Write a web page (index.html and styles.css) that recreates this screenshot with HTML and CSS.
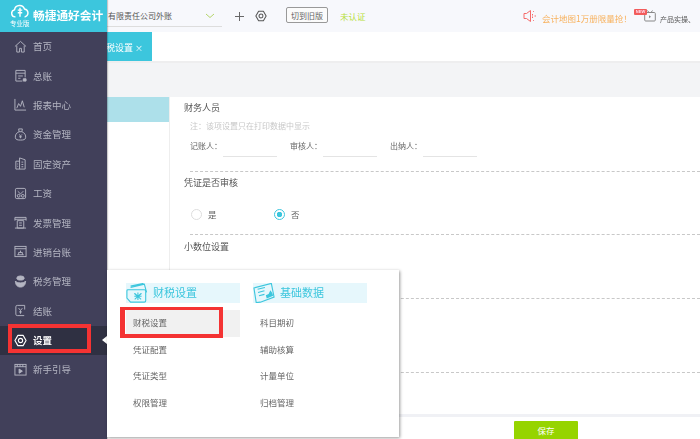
FILE: index.html
```html
<!DOCTYPE html>
<html lang="zh">
<head>
<meta charset="utf-8">
<title>畅捷通好会计</title>
<link rel="stylesheet" href="styles.css">
</head>
<body>
<div class="app">
  <main class="main">
    <header class="topbar">
      <div class="company">
        <span class="company-name">有限责任公司外账</span>
        <svg class="chev" viewBox="0 0 10 6"><path d="M1 1l4 3.5L9 1"/></svg>
      </div>
      <svg class="plus" viewBox="0 0 10 10"><path d="M5 0v10M0 5h10"/></svg>
      <svg class="gear" viewBox="0 0 14 14"><path d="M4.2 1.5h5.6L13 7l-3.2 5.5H4.2L1 7z" stroke-linejoin="round"/><circle cx="7" cy="7" r="2.3"/></svg>
      <button class="old-btn">切到旧版</button>
      <span class="cert">未认证</span>
      <div class="top-right">
        <svg class="speaker" viewBox="0 0 14 14"><path d="M1 4.5h2.5L7.5 1.5v11L3.500 9.500H1z"/><path d="M10 2l.8.8M11.500 7h1.500M10 12l.8-.8M9.500 5v4" stroke-dasharray="1.500 1"/></svg>
        <span class="promo">会计地图1万册限量抢！</span>
        <span class="tv-wrap">
          <svg class="tv" viewBox="0 0 12 12"><path d="M3.500 0.500l1.500 2M8.500 0.500l-1.500 2"/><rect x="0.700" y="2.500" width="10.600" height="8.500" rx="1"/><path class="tv-play" d="M5 5.200l2 1.500-2 1.500z"/></svg>
          <span class="new-badge">NEW</span>
        </span>
        <span class="guide">产品实操、</span>
      </div>
    </header>
    <nav class="tabs"><span class="tab">财税设置 <i class="tab-x">×</i></span></nav>
    <div class="band"></div>
    <div class="body">
      <aside class="left-panel"><div class="left-active"></div></aside>
      <section class="content">
        <h3 class="title first">财务人员</h3>
        <p class="note">注：该项设置只在打印数据中显示</p>
        <div class="fields">
          <label class="field">记账人：<span class="input"></span></label>
          <label class="field">审核人：<span class="input"></span></label>
          <label class="field">出纳人：<span class="input"></span></label>
        </div>
        <hr class="rule r1">
        <h3 class="title t2">凭证是否审核</h3>
        <div class="radios">
          <span class="radio"><i class="dot"></i>是</span>
          <span class="radio on"><i class="dot"></i>否</span>
        </div>
        <hr class="rule r2">
        <h3 class="title">小数位设置</h3>
        <hr class="rule r3">
        <hr class="rule r4">
      </section>
    </div>
    <footer class="footer"><button class="save">保存</button></footer>
  </main>

  <aside class="sidebar">
    <div class="logo">
      <svg class="logo-icon" viewBox="0 0 20 15"><path d="M5 14H4.500a4 4 0 0 1-.6-7.900A5.800 5.800 0 0 1 15 5.200a4.500 4.500 0 0 1 .5 8.800H15"/><path d="M10 4v10M7.500 6.500h5M7.500 9.500h5" class="logo-bar"/></svg>
      <span class="logo-text">畅捷通好会计</span>
      <span class="logo-sub">专业版</span>
    </div>
    <ul class="menu">
      <li class="item"><svg viewBox="0 0 14 14"><path d="M1 7l6-5.500L13 7M3 6v7h3V9h2v4h3V6"/></svg>首页</li>
      <li class="item"><svg viewBox="0 0 14 14"><path d="M9 13H2V1.500h10V9M2 4.500h10M4.500 7.500h5M4.500 10h2.500"/><path d="M10 10.500h3v2.500h-3z" class="fill"/></svg>总账</li>
      <li class="item"><svg viewBox="0 0 14 14"><path d="M1 1v12h12M3 11l2-5 2 3 2-6 2 7"/></svg>报表中心</li>
      <li class="item"><svg viewBox="0 0 14 14"><path d="M5 1h4L8.500 4c3 1 4.500 4 4 6.500-.3 2-2 2.500-5.500 2.500s-5.200-.5-5.500-2.500C1 8 2.500 5 5.500 4zM5.500 4h3M5.500 7l1.500 1.500L8.500 7M7 8.500V11M5.500 9.500h3"/></svg>资金管理</li>
      <li class="item"><svg viewBox="0 0 14 14"><path d="M2 4.500h4M2 4.500V13h10V3L6 1v12M8 5.500h2M8 8h2M8 10.500h2M3.500 7.500h1M3.500 10h1"/></svg>固定资产</li>
      <li class="item"><svg viewBox="0 0 14 14"><rect x="1.500" y="1.500" width="11" height="11" rx="1.500"/><circle cx="5" cy="9.500" r="1.500"/><circle cx="9.500" cy="9.500" r="1.500"/><path d="M4 4.500l3 3 3-3"/></svg>工资</li>
      <li class="item"><svg viewBox="0 0 14 14"><path d="M1 5V1.500h12V5M1 3.500h12M3.500 5h7v8h-7zM5.500 7.500h3M5.500 10h3M1 13h12"/></svg>发票管理</li>
      <li class="item"><svg viewBox="0 0 14 14"><rect x="1" y="1.500" width="12" height="11"/><path d="M1 4h12M3.500 10.500h7M5 10.500V8h4v2.500M7 8V6"/></svg>进销台账</li>
      <li class="item"><svg viewBox="0 0 14 14"><path d="M3 3.500a4 2.500 0 0 1 8 0c0 1-1 2-4 2s-4-1-4-2z" class="fill"/><path d="M1.500 6.500c0 4 2 6.500 5.500 6.500s5.500-2.500 5.500-6.500c-1 1.500-3 2-5.500 2s-4.500-.5-5.500-2z" class="fill"/></svg>税务管理</li>
      <li class="item"><svg viewBox="0 0 14 14"><path d="M11 12.500H3.500a1.500 1.500 0 0 1-1.500-1.500V3a1.500 1.500 0 0 1 1.500-1.500h8V6M5 4.500l2 2.500 2-2.500M7 7v3.500M5.500 8.500h3"/></svg>结账</li>
      <li class="item active"><svg viewBox="0 0 14 14"><path d="M4.200 1.500h5.600L13 7l-3.200 5.500H4.200L1 7z" stroke-linejoin="round"/><circle cx="7" cy="7" r="2.300"/></svg>设置<i class="caret"></i></li>
      <li class="item"><svg viewBox="0 0 14 14"><rect x="1" y="1.500" width="12" height="11.500"/><path d="M1 4h12M3.500 1.500V4M6.500 1.500V4M9.500 1.500V4"/><path d="M5.500 6.500l3.500 2.300-3.500 2.200z" class="fill"/></svg>新手引导</li>
    </ul>
  </aside>

  <div class="popup">
    <div class="pop-col">
      <div class="pop-head">
        <svg class="pop-icon" viewBox="0 0 24 21"><path d="M5 4.500L20 .8l2.500 9M2 7h18a1.500 1.500 0 0 1 1.500 1.500V19a1.500 1.500 0 0 1-1.500 1.500H5L1 16V8a1 1 0 0 1 1-1zM5 3l14-3M9 11l4 3.500 4-3.500M13 10v8M9 14h8M9.500 17.500l7-6.500M16.500 17.500l-7-6.500"/></svg>
        <span class="pop-title">财税设置</span>
      </div>
      <a class="pop-item hot">财税设置</a>
      <a class="pop-item">凭证配置</a>
      <a class="pop-item">凭证类型</a>
      <a class="pop-item">权限管理</a>
    </div>
    <div class="pop-col">
      <div class="pop-head">
        <svg class="pop-icon" viewBox="0 0 24 21"><path d="M1 5L20 0l3 15-15 5.500L3.500 21zM5 6.500l8-2M5.500 10l7-2M6.500 13.500l6-1.500"/><path class="fill-t" d="M14 13l3-1.500 2-4 2 3 1 3-7 3z"/></svg>
        <span class="pop-title">基础数据</span>
      </div>
      <a class="pop-item">科目期初</a>
      <a class="pop-item">辅助核算</a>
      <a class="pop-item">计量单位</a>
      <a class="pop-item">归档管理</a>
    </div>
  </div>

  <div class="mark mark-menu"></div>
  <div class="mark mark-pop"></div>
</div>
</body>
</html>
```
FILE: styles.css
```css
* { box-sizing: border-box; }
html, body { margin: 0; padding: 0; }
body {
  width: 700px;
  height: 439px;
  overflow: hidden;
  background: #fff;
  font-family: "Noto Sans CJK SC", "Liberation Sans", sans-serif;
  font-size: 9px;
  color: #555;
}
.app { position: relative; width: 700px; height: 439px; overflow: hidden; filter: blur(0.35px); }
.main { display: flex; flex-direction: column; height: 439px; }

/* top bar */
.topbar { display: flex; align-items: center; height: 32px; background: #f7f8fc; flex: none; }
.company {
  display: flex; align-items: center; justify-content: space-between;
  width: 222px; height: 27px; margin-top: -5px; padding: 5px 4px 0 108px;
  border-bottom: 1px solid #ddd;
}
.company-name { font-size: 8px; color: #555; }
.chev { width: 10px; height: 6px; margin-right: 3px; fill: none; stroke: #b5d56a; stroke-width: 1; }
.plus { width: 9px; height: 9px; margin-left: 13px; fill: none; stroke: #666; stroke-width: 1.100; }
.gear { width: 12px; height: 12px; margin-left: 11px; fill: none; stroke: #555; stroke-width: 1.200; }
.old-btn {
  width: 42px; height: 16px; margin: -2px 0 0 19px; padding: 0;
  background: #fbfbfb; border: 1px solid #999; border-radius: 2px;
  font: 8px "Noto Sans CJK SC", sans-serif; color: #666;
}
.cert { margin-left: 12px; color: #b8df3c; font-size: 8.500px; }
.top-right { display: flex; align-items: center; margin-left: auto; padding-right: 5px; }
.speaker { width: 14px; height: 14px; margin-right: 5px; fill: none; stroke: #f56a6a; stroke-width: 1; }
.promo { color: #f8b25f; font-size: 8.500px; margin-top: 4px; width: 92px; white-space: nowrap; }
.tv-wrap { position: relative; display: block; width: 22px; height: 13px; margin-top: -2px; }
.tv { position: absolute; left: 10px; top: 1px; width: 12px; height: 12px; fill: none; stroke: #888; stroke-width: 1; }
.tv .tv-play { fill: #888; stroke: none; }
.new-badge {
  position: absolute; left: 0; top: 0; width: 13px; height: 6px;
  background: #f25c5c; color: #fde; font: bold 4px/6px "Liberation Sans", sans-serif;
  text-align: center; border-radius: 1px;
}
.guide { margin: 5px 0 0 4px; color: #555; font-size: 7px; white-space: nowrap; }

/* tabs */
.tabs { height: 29px; background: #fff; flex: none; display: flex; }
.tab {
  width: 152px; height: 29px; padding-left: 97px;
  background: #3cc6dd; color: #fff; font-size: 9px; line-height: 32px; white-space: nowrap;
}
.tab-x { font-style: normal; font-size: 8px; }
.band { height: 36px; background: #f3f4f6; border-top: 2px solid #eeeeef; flex: none; }

/* body */
.body { display: flex; height: 317px; flex: none; }
.left-panel { width: 170px; border-right: 1px solid #eee; flex: none; }
.left-active { height: 25px; background: #ade0ea; }
.content { flex: 1; min-width: 0; padding: 4px 0 0 14px; overflow: hidden; }
.title { margin: 5px 0 0; font-weight: normal; font-size: 9px; line-height: 14px; color: #555; }
.title.first { margin-top: 0; }
.title.t2 { margin-top: 4px; }
.note { margin: 4px 0 0 6px; line-height: 13px; height: 14px; color: #c8c8c8; font-size: 8px; }
.fields { display: flex; margin: 3px 0 0 6px; }
.field { display: flex; width: 100px; height: 21px; line-height: 19px; color: #666; font-size: 8px; }
.input { display: block; width: 54px; height: 21px; margin-left: 1px; border-bottom: 1px solid #e4e4e4; }
.rule { height: 0; margin: 0 0 0 6px; border: 0; border-top: 1px dashed #c8c8c8; }
.r1 { margin-top: 14px; }
.radios { display: flex; margin: 17px 0 0 7px; height: 14px; }
.radio { display: flex; align-items: center; width: 83px; color: #666; font-size: 8.500px; }
.dot {
  display: block; width: 11px; height: 11px; margin-right: 6px;
  border: 1px solid #ddd; border-radius: 50%;
}
.radio.on .dot {
  border-color: #3cc6dd; background: radial-gradient(circle, #3cc6dd 0 2.500px, #fff 3px);
}
.r2 { margin-top: 13px; }
.r3 { margin-top: 44px; }
.r4 { margin-top: 73px; }

/* footer */
.footer {
  flex: none; height: 25px; margin-top: 0; padding-top: 4px;
  border-top: 3px solid #f0f1f5; background: #fff; display: flex; justify-content: flex-start;
}
.save {
  width: 64px; height: 22px; margin-left: 514px; padding: 0 0 5px;
  background: #96d400; border: 0; border-radius: 1px;
  color: #fff; font: 8.500px "Noto Sans CJK SC", sans-serif;
}

/* sidebar */
.sidebar {
  position: absolute; left: 0; top: 0; width: 107px; height: 439px;
  background: #41405a; box-shadow: 1px 0 1px rgba(0,0,0,.2);
}
.logo { position: relative; height: 32px; background: #3cc6dd; }
.logo-icon { position: absolute; left: 11px; top: 4px; width: 18px; height: 14px; fill: none; stroke: #fff; stroke-width: 1.600; }
.logo-text { position: absolute; left: 33px; top: 7px; font-size: 11.700px; line-height: 16px; font-weight: 700; color: #fff; white-space: nowrap; }
.logo-sub { position: absolute; left: 10px; top: 19px; font-size: 6.500px; line-height: 9px; color: #fff; white-space: nowrap; }
.menu { list-style: none; margin: 0; padding: 0; }
.item {
  position: relative; display: flex; align-items: center; height: 29.400px;
  padding: 0 0 1px 14px; color: #b4b5c2; font-size: 9.500px; gap: 6px;
}
.item svg { width: 13px; height: 13px; flex: none; fill: none; stroke: #b4b5c2; stroke-width: 1; }
.item svg .fill { fill: #b4b5c2; }
.item.active { background: #2f3042; color: #fff; font-weight: 700; }
.item.active svg { stroke: #fff; stroke-width: 1.200; }
.caret {
  position: absolute; right: 0; top: 10px;
  border: 4.500px solid transparent; border-right: 5px solid #fff; border-left: 0;
}

/* popup */
.popup {
  position: absolute; left: 107px; top: 270px; width: 292px; height: 167px;
  display: flex; gap: 13px; padding: 13px 0 0 19px;
  background: #fff; box-shadow: 1px 1px 3px rgba(0,0,0,.4);
}
.pop-col { width: 114px; display: flex; flex-direction: column; }
.pop-head {
  display: flex; align-items: center; gap: 5px; height: 20px; margin-bottom: 7px;
  background: #e6f7fc; color: #3cc6dd; font-size: 11px; line-height: 19px; white-space: nowrap;
}
.pop-title { height: 20px; }
.pop-icon { width: 22px; height: 20px; flex: none; fill: none; stroke: #3cc6dd; stroke-width: 1.200; }
.pop-icon .fill-t { fill: #3cc6dd; stroke: none; }
.pop-item {
  display: block; height: 26.500px; padding-left: 7px; line-height: 25px; font-size: 8.500px; color: #666;
}
.pop-item.hot { background: #f1f1f1; }

/* red annotation boxes */
.mark { position: absolute; border: 4px solid #f43333; }
.mark-menu { left: 8px; top: 324px; width: 83px; height: 29px; }
.mark-pop { left: 120px; top: 307px; width: 103px; height: 31px; border-width: 3px 4px 4px 5px; }
```
